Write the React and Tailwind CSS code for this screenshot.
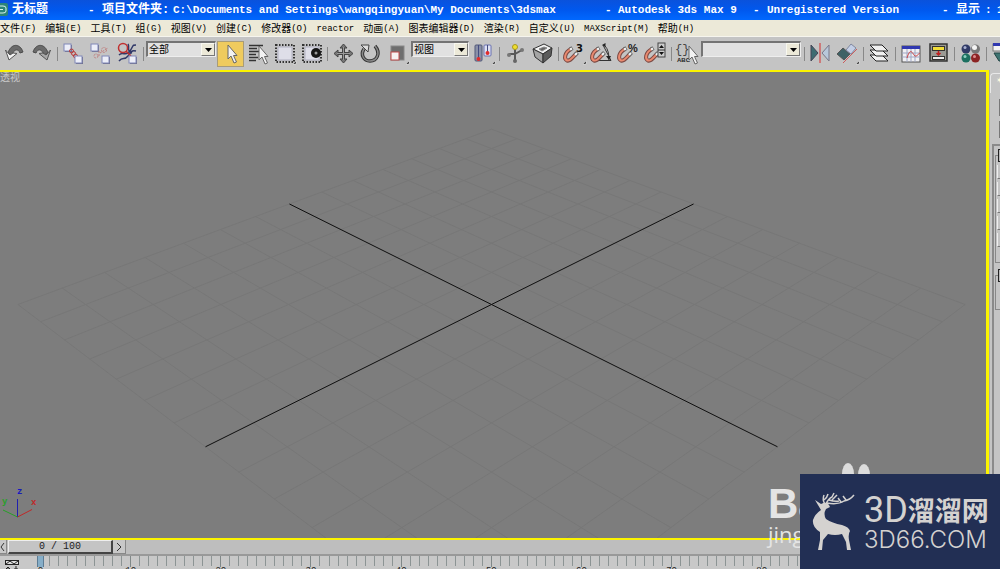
import React, { useState } from "react";

const menuItems = [
  { zh: "文件", en: "(F)" },
  { zh: "编辑", en: "(E)" },
  { zh: "工具", en: "(T)" },
  { zh: "组", en: "(G)" },
  { zh: "视图", en: "(V)" },
  { zh: "创建", en: "(C)" },
  { zh: "修改器", en: "(O)" },
  { zh: "", en: "reactor" },
  { zh: "动画", en: "(A)" },
  { zh: "图表编辑器", en: "(D)" },
  { zh: "渲染", en: "(R)" },
  { zh: "自定义", en: "(U)" },
  { zh: "", en: "MAXScript(M)" },
  { zh: "帮助", en: "(H)" },
];

const Box = ({ x, y }) => (
  <g>
    <rect x={x + 1} y={y + 1} width="7" height="7" fill="#6c6c86" />
    <rect x={x} y={y} width="7" height="7" fill="#eceef8" stroke="#8088b8" strokeWidth="1" />
  </g>
);

const Cursor = ({ x, y }) => (
  <path
    transform={`translate(${x} ${y})`}
    d="M0 0V14L3 11L6 18L8.500 17L5.500 10.500H9Z"
    fill="#f2f2f2"
    stroke="#666"
    strokeWidth="1"
  />
);

const Magnet = () => (
  <g fill="none">
    <path d="M10 8C3 12 3 18 6 19.500C9 20.500 11 17 15 13" stroke="#7c4a44" strokeWidth="4" />
    <path d="M10 8C3 12 3 18 6 19.500C9 20.500 11 17 15 13" stroke="#ea8a70" strokeWidth="2" />
    <path d="M11.500 7L9 8.500M16.500 11.500L14 14" stroke="#666" strokeWidth="4" />
    <path d="M11 7.500L9 8.500M16 12L14 14" stroke="#f4f4f4" strokeWidth="2" />
  </g>
);

const Corner = () => <path d="M25 20V23H22Z" fill="#111" stroke="#eee" strokeWidth="0.500" />;

const Marquee = () => (
  <g>
    <rect x="5" y="4" width="18" height="17" fill="none" stroke="#333" strokeWidth="2" strokeDasharray="1.500 1.500" />
    <rect x="7" y="6" width="14" height="13" fill="#dedee8" stroke="#b0b0c0" />
  </g>
);

const icons = {
  undo: (
    <g>
      <path d="M7 12C10 2 19 2 22 11L19 12C17 7 13 8 11 14Z" fill="#6a6a6a" stroke="#4c4c4c" />
      <path d="M4.500 9L8 19L16 12.500L12 12L9 14Z" fill="#f4f4f4" stroke="#555" />
    </g>
  ),
  redo: (
    <g>
      <path d="M20 12C17 2 8 2 5 11L8 12C10 7 14 8 16 14Z" fill="#6a6a6a" stroke="#4c4c4c" />
      <path d="M22.500 9L19 19L11 12.500L15 12L18 14Z" fill="#a8a8a8" stroke="#555" />
    </g>
  ),
  link: (
    <g>
      <Box x={4} y={3} />
      <g fill="none" stroke="#b83a3a" strokeWidth="1">
        <circle cx="11.500" cy="10" r="2" />
        <circle cx="13.500" cy="12.500" r="2" />
        <circle cx="15.500" cy="15" r="2" />
      </g>
      <Box x={15} y={15} />
    </g>
  ),
  unlink: (
    <g>
      <Box x={4} y={3} />
      <g fill="none" stroke="#c08080" strokeDasharray="2 1">
        <circle cx="9" cy="15" r="2" />
        <circle cx="17" cy="9" r="2.500" />
        <path d="M12 10V16M13 12L21 7" />
      </g>
      <Box x={15} y={15} />
    </g>
  ),
  bind: (
    <g fill="none">
      <path d="M5 14C9 10 12 16 16 10S18 4 22 4M5 20C9 15 10 20 14 15S18 9 22 10M14 3C16 6 12 10 18 12" stroke="#303868" strokeWidth="1.500" />
      <circle cx="9" cy="7" r="4.500" stroke="#c03030" strokeWidth="1.500" />
      <path d="M12 10L17 15" stroke="#c03030" strokeWidth="1.500" />
      <Box x={15} y={15} />
    </g>
  ),
  select: <Cursor x={11} y={4} />,
  byName: (
    <g>
      <path d="M5 4.500H19M5 7.500H13M5 10.500H15M5 13.500H12M5 16.500H14M5 19.500H12" stroke="#333" strokeWidth="1.500" />
      <Cursor x={15} y={5} />
    </g>
  ),
  region: (
    <g>
      <Marquee />
      <Corner />
    </g>
  ),
  window: (
    <g>
      <Marquee />
      <circle cx="18" cy="12" r="5" fill="#161616" />
      <circle cx="18" cy="12" r="1.500" fill="#999" />
    </g>
  ),
  move: (
    <g>
      <path d="M13.500 5V20M6 12.500H21" stroke="#444" strokeWidth="3" />
      <path d="M13.500 3L17 7H10ZM13.500 22L17 18H10ZM4 12.500L8 9V16ZM23 12.500L19 9V16Z" fill="#777" stroke="#444" />
      <path d="M13.500 6V19M7 12.500H20" stroke="#999" />
    </g>
  ),
  rotate: (
    <g fill="none">
      <path d="M7 8C3 14 7 20 13 20C20 20 24 12 18 5" stroke="#333" strokeWidth="3.500" />
      <path d="M7 8C3 14 7 20 13 20C20 20 24 12 18 5" stroke="#888" strokeWidth="1.500" />
      <path d="M4 4H12L11 11L8 8Z" fill="#ddd" stroke="#444" />
    </g>
  ),
  scale: (
    <g>
      <rect x="7" y="5" width="13" height="14" fill="#6e6e6e" stroke="#888" />
      <rect x="7" y="11" width="8" height="8" fill="#f6f0f0" stroke="#c04848" />
      <Corner />
    </g>
  ),
  pivot: (
    <g>
      <rect x="5" y="4" width="7" height="16" rx="1" fill="#8a90a8" stroke="#505878" />
      <rect x="14" y="4" width="7" height="11" rx="1" fill="#dfe2f4" stroke="#6870b0" />
      <path d="M8.500 4V18M17.500 4V12" stroke="#444c80" />
      <circle cx="8.500" cy="18" r="2" fill="#e02c2c" />
      <circle cx="17.500" cy="12" r="2" fill="#e02c2c" />
      <Corner />
    </g>
  ),
  manipulate: (
    <g>
      <path d="M13 13V7M13 13L20 9M13 13L7 13M13 13V20" stroke="#585858" strokeWidth="2" />
      <circle cx="13" cy="6" r="2.500" fill="#efdf30" stroke="#a89820" />
      <circle cx="20" cy="9" r="2" fill="#777" />
      <circle cx="7" cy="14" r="2" fill="#777" />
      <circle cx="13" cy="20" r="2" fill="#666" />
    </g>
  ),
  cube: (
    <g stroke="#333" strokeLinejoin="round">
      <path d="M4 8L15 3L23 7L14 13Z" fill="#f2f2f2" />
      <path d="M4 8L14 13V22L6 16Z" fill="#a4a4a4" />
      <path d="M14 13L23 7L22 15L14 22Z" fill="#5c5c5c" />
      <path d="M10 8L15 6L18 7L13 10Z" fill="#666" stroke="#888" />
    </g>
  ),
  snap: (
    <g>
      <Magnet />
      <text x="15" y="11" className="text-[10px] font-bold font-['DejaVu_Sans']" fill="#111">3</text>
      <Corner />
    </g>
  ),
  angle: (
    <g>
      <path d="M3 19.500H23L15 4M17 5C20 8 21 13 21 19" fill="none" stroke="#333" />
      <path d="M14 4L17.500 2V6ZM18 15L23 15L21 19Z" fill="#222" />
      <Magnet />
    </g>
  ),
  percent: (
    <g>
      <Magnet />
      <text x="13" y="11" className="text-[11px] font-bold font-['Liberation_Sans']" fill="#222">%</text>
    </g>
  ),
  spinner: (
    <g>
      <Magnet />
      <rect x="16" y="2" width="7" height="14" fill="#ccc" stroke="#444" />
      <path d="M16 9H23" stroke="#333" />
      <path d="M17 7L19.500 4L22 7ZM17 11H22L19.500 14Z" fill="#111" />
    </g>
  ),
  named: (
    <g>
      <text x="1" y="12" className="text-[12px] font-['Liberation_Mono']" fill="#444">{"{}"}</text>
      <text x="3" y="21" className="text-[6px] font-bold font-['Liberation_Sans']" fill="#222">ABC</text>
      <Cursor x={15} y={5} />
    </g>
  ),
  mirror: (
    <g>
      <path d="M4 4V20L11 12Z" fill="#3e6c72" stroke="#445" />
      <path d="M22 4V20L15 12Z" fill="#b8c8da" stroke="#778" />
      <path d="M13 2V22" stroke="#d06060" strokeWidth="1.500" />
    </g>
  ),
  align: (
    <g>
      <path d="M3 13L9 7L16 13L10 19Z" fill="#3e6266" stroke="#555" />
      <path d="M12 9L17 3L22 7L17 13Z" fill="#c4cfe6" stroke="#8088a0" />
      <path d="M9 22L23 8" stroke="#cc5c5c" />
      <Corner />
    </g>
  ),
  layers: (
    <g fill="#f0f0f0" stroke="#222" strokeLinejoin="round">
      <path d="M4 14H16L22 20H10Z" />
      <path d="M4 9H16L22 15H10Z" />
      <path d="M4 4H16L22 10H10Z" />
    </g>
  ),
  curve: (
    <g>
      <rect x="4" y="5" width="18" height="16" fill="#f0f0f4" stroke="#555" />
      <rect x="4" y="5" width="18" height="3" fill="#3038b0" />
      <path d="M9 8V21M13 8V21M17 8V21M4 12H22M4 16H22" stroke="#a0a8c4" />
      <path d="M9 17C12 7 14 11 16 14S20 13 22 12" fill="none" stroke="#cc3c3c" />
    </g>
  ),
  schematic: (
    <g>
      <rect x="5" y="3" width="17" height="17" fill="#9a9a94" stroke="#333" strokeWidth="1.500" />
      <rect x="7.500" y="5.500" width="12" height="4" fill="#f0dc38" stroke="#333" />
      <rect x="7.500" y="15.500" width="12" height="3" fill="#eee" stroke="#333" />
      <path d="M13.500 10V14M11.500 12L13.500 14L15.500 12" fill="none" stroke="#c02020" strokeWidth="1.500" />
    </g>
  ),
  material: (
    <g>
      <circle cx="9" cy="8" r="4.500" fill="#303a66" />
      <circle cx="18.500" cy="8" r="4.500" fill="#777" />
      <circle cx="9" cy="17" r="4.500" fill="#1c7060" />
      <circle cx="18.500" cy="17" r="4.500" fill="#8c2424" />
      <circle cx="8" cy="6.500" r="1.500" fill="#a8b0d0" />
      <circle cx="17.500" cy="6.500" r="2.500" fill="#f4f4f4" />
      <circle cx="8" cy="15.500" r="1.500" fill="#8cd0c0" />
      <circle cx="17.500" cy="15.500" r="1.500" fill="#e08c8c" />
    </g>
  ),
  render: (
    <g>
      <rect x="4" y="3" width="18" height="7" fill="#f4f4f4" stroke="#777" />
      <rect x="4" y="2" width="18" height="3" fill="#3038b0" />
      <path d="M5 12H20L17 20H10Z" fill="#3e7472" stroke="#244" />
    </g>
  ),
};

const toolbar = [
  "undo", "redo", "|", "link", "unlink", "bind", "|",
  { label: "选择过滤器", value: "全部", width: "w-[70px]" },
  "select", "byName", "region", "window", "|", "move", "rotate", "scale",
  { label: "参考坐标系", value: "视图", width: "w-[58px]" },
  "pivot", "|", "manipulate", "cube", "|", "snap", "angle", "percent", "spinner", "|", "named",
  { label: "命名选择集", value: "", width: "w-[100px]" },
  "|", "mirror", "align", "|", "layers", "|", "curve", "schematic", "|", "material", "|", "render",
];

const Combo = ({ label, value, width }) => (
  <div className={`relative shrink-0 self-start mt-1 mr-px h-4 ${width}`}>
    <select
      aria-label={label}
      defaultValue={value}
      className="block w-full h-4 appearance-none border-t-2 border-l-2 border-b border-r border-t-[#747474] border-l-[#747474] border-b-[#eee] border-r-[#eee] bg-[#e1e1e1] pl-px text-[10px] leading-3 text-black outline-none"
    >
      <option value={value}>{value}</option>
    </select>
    <span className="pointer-events-none absolute right-px top-0.5 flex h-[13px] w-[14px] items-center justify-center border border-[#f8f8f0] border-b-[#777] border-r-[#777] bg-[#ece9d8]">
      <svg width="7" height="4" viewBox="0 0 7 4">
        <path d="M0 0H7L3.500 4Z" fill="#000" />
      </svg>
    </span>
  </div>
);

const TitleBar = () => (
  <header className="flex h-5 shrink-0 items-center overflow-hidden whitespace-nowrap bg-linear-to-b from-[#0a52dc] via-[#0058ee] to-[#0068ff] text-[11px] font-bold text-white font-['Liberation_Mono','Noto_Sans_CJK_SC',monospace]">
    <svg className="mr-1 shrink-0" width="8" height="16" viewBox="0 0 8 16">
      <path d="M0 1H6Q8 1 8 3V12Q8 14 6 14H0Z" fill="#2c8478" />
      <path d="M0 4H3Q6 4 6 6V9Q6 11 3 11H0M0 7.500H3" fill="none" stroke="#d8f4ec" strokeWidth="1" />
    </svg>
    <span className="w-[76px] shrink-0 text-[12px]">无标题</span>
    <span className="w-[14px] shrink-0">-</span>
    <span className="w-[71px] shrink-0 text-[12px]">项目文件夹:</span>
    <span className="w-[432px] shrink-0">C:\Documents and Settings\wangqingyuan\My Documents\3dsmax</span>
    <span className="w-[13px] shrink-0">-</span>
    <span className="w-[135px] shrink-0">Autodesk 3ds Max 9</span>
    <span className="w-[14px] shrink-0">-</span>
    <span className="w-[175px] shrink-0">Unregistered Version</span>
    <span className="w-[14px] shrink-0">-</span>
    <span className="w-[29px] shrink-0 text-[12px]">显示</span>
    <span className="w-[12px] shrink-0">:</span>
    <span>1</span>
  </header>
);

const MenuBar = () => (
  <nav className="flex h-[17px] shrink-0 items-center gap-[9px] overflow-hidden border-b border-[#f6f5ee] bg-[#ece9d8] pt-0.5 text-black">
    {menuItems.map((item) => (
      <button key={item.en + item.zh} className="flex shrink-0 items-center whitespace-nowrap text-[10px] leading-[14px]">
        {item.zh}
        <span className="text-[9px] font-['Liberation_Mono',monospace]">{item.en}</span>
      </button>
    ))}
  </nav>
);

const Toolbar = () => {
  const [active, setActive] = useState("select");

  return (
    <div className="flex h-[33px] shrink-0 items-center overflow-hidden bg-[#c4c4c4] pl-px">
      {toolbar.map((item, index) => {
        if (item === "|") {
          return (
            <span key={index} className="flex w-[5px] shrink-0 justify-center">
              <span className="h-[14px] w-px bg-[#888]"></span>
            </span>
          );
        }
        if (typeof item === "object") return <Combo key={index} {...item} />;
        return (
          <button
            key={index}
            aria-label={item}
            onClick={() => setActive(item)}
            className={`h-[26px] w-[27px] shrink-0 ${
              active === item ? "bg-[#efcb5e] outline -outline-offset-1 outline-[#a89c78]" : ""
            }`}
          >
            <svg width="27" height="26" viewBox="0 0 27 26">
              {icons[item]}
            </svg>
          </button>
        );
      })}
    </div>
  );
};

// ground plane point -> screen, u and v run from -1 to 1
const project = (u, v) => {
  const w = 1 + 0.172 * (u + v);
  return [492 + (236.8 * (u - v)) / w, 234.5 - (117.8 * (u + v)) / w];
};

const gridLine = (a, b) => {
  const [x1, y1] = project(a[0], a[1]);
  const [x2, y2] = project(b[0], b[1]);
  return { x1, y1, x2, y2 };
};

const Viewport = () => {
  const steps = Array.from({ length: 15 }, (_, i) => (i - 7) / 7);

  return (
    <main className="relative min-h-0 flex-1 overflow-hidden border-y-2 border-r-[3px] border-[#fcf400] bg-[#7d7d7d]">
      <svg className="h-full w-full" viewBox="0 2 987 466" preserveAspectRatio="xMidYMid slice">
        <g stroke="#777777" strokeWidth="1">
          {steps.map((s) => (
            <g key={s}>
              <line {...gridLine([s, -1], [s, 1])} />
              <line {...gridLine([-1, s], [1, s])} />
            </g>
          ))}
        </g>
        <g stroke="#111" strokeWidth="1">
          <line {...gridLine([-1, 0], [1, 0])} />
          <line {...gridLine([0, -1], [0, 1])} />
        </g>
      </svg>
      <span className="absolute left-0 top-0 text-[10px] leading-3 text-[#c8c8c8]">透视</span>
      <svg className="absolute bottom-4 left-0" width="40" height="36" viewBox="0 0 40 36">
        <path d="M17.500 31V13" stroke="#2020b0" />
        <path d="M17.500 31L32 23.500" stroke="#c02828" />
        <path d="M17.500 31L3 24" stroke="#28a028" />
        <g className="text-[9px] font-bold font-['Liberation_Mono',monospace]">
          <text x="17" y="8" fill="#1818c0">z</text>
          <text x="31" y="19" fill="#c02828">x</text>
          <text x="2" y="18" fill="#28a028">y</text>
        </g>
      </svg>
    </main>
  );
};

const TimeSlider = () => {
  const frames = Array.from({ length: 101 }, (_, i) => i);

  return (
    <footer className="h-[29px] shrink-0 overflow-hidden bg-[#c8c8c8] text-[#222] font-['Liberation_Mono',monospace]">
      <div className="flex h-[14px] bg-[#bebebe] text-[10px] leading-3">
        <button aria-label="上一帧" className="flex w-[7px] items-center justify-end border-b border-r border-[#888] bg-[#c8c8c8]">
          <svg width="6" height="8" viewBox="0 0 6 8"><path d="M4 0L1 4L4 8" fill="none" stroke="#333" /></svg>
        </button>
        <button className="ml-px w-[105px] border-b-2 border-r-2 border-l border-t border-b-[#444] border-r-[#444] border-l-[#eee] border-t-[#eee] bg-[#c4c4c4] text-[10px] leading-[11px]">
          0 / 100
        </button>
        <button aria-label="下一帧" className="flex w-[13px] items-center justify-center border-b border-r border-[#888] bg-[#c8c8c8]">
          <svg width="6" height="8" viewBox="0 0 6 8"><path d="M1 0L5 4L1 8" fill="none" stroke="#333" /></svg>
        </button>
      </div>
      <div className="flex border-t-2 border-[#999]">
        <svg className="mt-1 ml-1 shrink-0" width="32" height="12" viewBox="0 0 32 12">
          <rect x="1.500" y="0.500" width="13" height="4" fill="#ddd" stroke="#222" />
          <path d="M2 4L6 1L10 4L14 1M4 12V7M2 9L4 7L6 9M12 6V12M10 9H14" fill="none" stroke="#222" />
        </svg>
        <div className="mr-[42px] flex min-w-0 flex-1">
          {frames.map((frame) => (
            <div key={frame} className="flex min-w-0 flex-1 flex-col items-center">
              <span
                className={
                  frame === 0
                    ? "h-[11px] w-[7px] border-x border-[#5c7c94] bg-[#86aec8]"
                    : frame % 10 === 0
                      ? "h-[11px] w-px bg-[#808888]"
                      : "h-[10px] w-px bg-[#8c9494]"
                }
              ></span>
              {frame % 10 === 0 && <span className="text-[9px] leading-[8px]">{frame}</span>}
            </div>
          ))}
        </div>
      </div>
    </footer>
  );
};

const CommandPanel = () => (
  <aside className="flex w-[11px] shrink-0 flex-col overflow-hidden border-l border-[#aaa] bg-[#c4c4c4]">
    <div className="mt-[3px] h-5 rounded-tl border-l border-t border-[#e8e8e8] pl-[5px] text-[8px] leading-[14px] text-[#fffbe0]">✶</div>
    <div className="mt-[6px] ml-[9px] h-[17px] bg-[#777]"></div>
    <div className="mt-[5px] ml-[9px] h-[17px] bg-[#777]"></div>
    <div className="mt-[6px] ml-[2px] flex-1 border-l-2 border-t-2 border-[#8a8a8a] pl-px">
      <div className="mt-[9px] h-[108px] border-l border-t border-b border-[#888] pl-px">
        <div className="-mt-[7px] ml-px h-[13px] border border-r-0 border-[#222] bg-[#bbb]"></div>
        {[0, 1, 2, 3, 4].map((row) => (
          <div key={row} className="mt-[3px] h-[14px] border-l border-b border-l-[#eee] border-b-[#777]"></div>
        ))}
      </div>
      <div className="mt-[12px] h-[35px] border-l border-t border-b border-[#888] pl-px">
        <div className="-mt-[7px] ml-px h-[13px] border border-r-0 border-[#222] bg-[#bbb]"></div>
      </div>
    </div>
  </aside>
);

const Watermark = () => (
  <div className="pointer-events-none absolute bottom-5 right-[170px] h-[86px] w-[62px] text-[#e4e4e4]">
    <svg className="absolute left-[72px] top-0" width="32" height="24" viewBox="0 0 32 24">
      <ellipse cx="8" cy="11" rx="6" ry="11" fill="#dcdcdc" />
      <ellipse cx="24" cy="12" rx="6" ry="11" fill="#dcdcdc" />
    </svg>
    <p className="absolute left-0 top-[20px] text-[42px] font-bold leading-[42px] font-['Liberation_Sans',sans-serif]">Ba</p>
    <p className="absolute left-0 top-[59px] text-[22px] leading-6 font-['Open_Sans',sans-serif]">jing</p>
  </div>
);

const Brand = () => (
  <div className="absolute bottom-0 right-0 flex h-[95px] w-[200px] items-center bg-[#222f54] text-[#d4d2d0]">
    <svg className="ml-3 shrink-0" width="44" height="60" viewBox="0 0 44 60">
      <path
        d="M3 8L9 12Q15 9 17 13L18 15L14 17Q11 22 14 27Q20 31 30 33Q37 35 38 39Q36 42 37 48L39 58H35L34 50L30 42Q23 44 16 42L11 48L10 58H6L8 48V40Q0 35 1 28Q3 22 9 18Z"
        fill="#d4d2d0"
      />
      <path
        d="M13 12Q10 8 12 3M12 8Q15 6 16 2M14 12Q16 7 20 5L22 1M17 8Q23 10 27 9M20 8L25 3M15 11Q26 13 32 9Q38 8 42 3M29 10L26 6M34 8L31 4"
        fill="none"
        stroke="#d4d2d0"
        strokeWidth="1.500"
      />
    </svg>
    <div className="ml-2 whitespace-nowrap">
      <p className="flex items-center leading-9">
        <span className="text-[36px] font-['Roboto',sans-serif]">3D</span>
        <span className="text-[27px] font-bold font-['Noto_Sans_CJK_SC',sans-serif]">溜溜网</span>
      </p>
      <p className="text-[24px] font-light leading-6 font-['Inter',sans-serif]">3D66.COM</p>
    </div>
  </div>
);

const App = () => {
  return (
    <div className="relative flex h-screen w-full flex-col overflow-hidden bg-[#c4c4c4] font-['Liberation_Sans','Noto_Sans_CJK_SC',sans-serif]">
      <TitleBar />
      <MenuBar />
      <Toolbar />
      <div className="flex min-h-0 flex-1">
        <div className="flex min-w-0 flex-1 flex-col">
          <Viewport />
          <TimeSlider />
        </div>
        <CommandPanel />
      </div>
      <Watermark />
      <Brand />
    </div>
  );
};

export default App;
